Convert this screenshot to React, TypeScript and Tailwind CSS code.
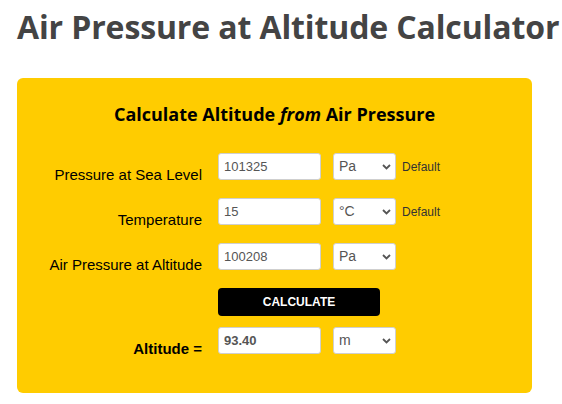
const rows = [
  { label: "Pressure at Sea Level", value: "101325", unit: "Pa", units: ["Pa", "hPa", "kPa", "bar", "psi"], note: "Default" },
  { label: "Temperature", value: "15", unit: "°C", units: ["°C", "°F", "K"], note: "Default" },
  { label: "Air Pressure at Altitude", value: "100208", unit: "Pa", units: ["Pa", "hPa", "kPa", "bar", "psi"] },
];

function UnitSelect({ value, units }: { value: string; units: string[] }) {
  return (
    <div className="relative">
      <select
        defaultValue={value}
        className="h-[27px] w-[63px] appearance-none rounded-[3px] border border-[#cfcfcf] bg-white pl-[5px] text-[14px] text-[#555] outline-none"
      >
        {units.map((u) => (
          <option key={u}>{u}</option>
        ))}
      </select>
      <svg
        className="pointer-events-none absolute right-[5px] top-[11px]"
        width="9"
        height="6"
        viewBox="0 0 9 6"
        fill="none"
      >
        <path d="M1 1l3.5 3.5L8 1" stroke="#555" strokeWidth="1.8" />
      </svg>
    </div>
  );
}

export default function App() {
  return (
    <div className="min-h-screen bg-white px-[17px] font-['Open_Sans',sans-serif]">
      <h1 className="whitespace-nowrap pt-[5px] text-[32px] font-bold leading-[44px] tracking-[-0.12px] text-[#444]">
        Air Pressure at Altitude Calculator
      </h1>

      <div className="mt-[29px] w-[515px] rounded-md bg-[#ffcc00] pb-[39px] pt-[24px]">
        <h2 className="text-center text-[18px] font-bold leading-[24px] text-black">
          Calculate Altitude <i>from</i> Air Pressure
        </h2>

        <div className="mt-[27px] flex flex-col gap-[18px] font-['Liberation_Sans',Arial,sans-serif]">
          {rows.map((r) => (
            <div key={r.label} className="flex items-end gap-4">
              <label className="-mb-[3px] w-[185px] text-right text-[15px] leading-[17px] text-black">
                {r.label}
              </label>
              <div className="flex items-center">
                <input
                  defaultValue={r.value}
                  className="h-[27px] w-[103px] rounded-[3px] border border-[#cfcfcf] bg-white px-[5px] text-[13px] text-[#555] outline-none"
                />
                <div className="ml-[12px]">
                  <UnitSelect value={r.unit} units={r.units} />
                </div>
                {r.note && (
                  <span className="ml-[6px] text-[12px] text-[#333]">{r.note}</span>
                )}
              </div>
            </div>
          ))}

          {/* Calculate */}
          <div className="flex gap-4">
            <div className="w-[185px]" />
            <button className="h-[28px] w-[162px] rounded-[4px] bg-black text-[12px] font-bold text-white">
              CALCULATE
            </button>
          </div>

          {/* Result */}
          <div className="-mt-[7px] flex items-end gap-4">
            <label className="-mb-[3px] w-[185px] text-right text-[15px] font-bold leading-[17px] text-black">
              Altitude =
            </label>
            <div className="flex items-center">
              <input
                defaultValue="93.40"
                readOnly
                className="h-[27px] w-[103px] rounded-[3px] border border-[#cfcfcf] bg-white px-[5px] text-[13px] font-bold text-[#555] outline-none"
              />
              <div className="ml-[12px]">
                <UnitSelect value="m" units={["m", "ft", "km", "mi"]} />
              </div>
            </div>
          </div>
        </div>
      </div>
    </div>
  );
}
